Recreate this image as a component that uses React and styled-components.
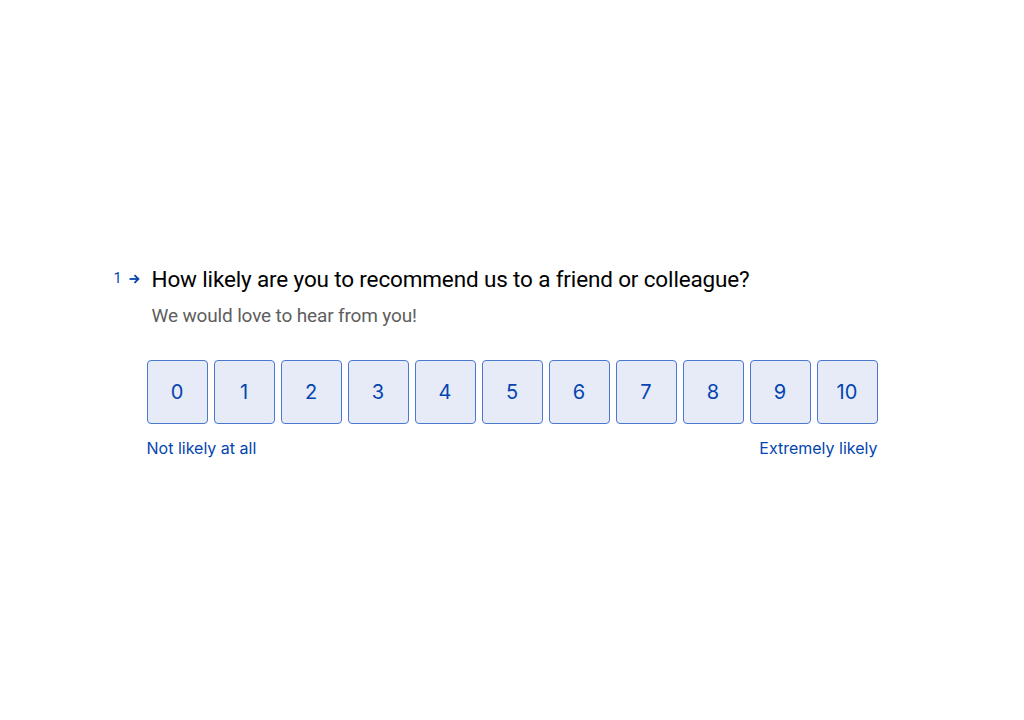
import React from 'react';
import styled, { createGlobalStyle } from 'styled-components';

const GlobalStyle = createGlobalStyle`
  html, body {
    margin: 0;
    padding: 0;
    background: #ffffff;
  }
  body {
    font-family: Inter, "Noto Sans", sans-serif;
  }
`;

const Page = styled.main`
  width: 1024px;
  height: 720px;
  display: flex;
  align-items: center;
  justify-content: center;
`;

const Block = styled.section`
  width: 731px;
  padding-top: 2px;
  position: relative;
`;

const Header = styled.div`
  position: relative;
  padding-left: 5px;
`;

const Counter = styled.div`
  position: absolute;
  left: -33px;
  top: 6px;
  display: flex;
  align-items: center;
  gap: 7px;
  color: #0445af;
  font-family: Roboto, Inter, sans-serif;
  font-size: 14.5px;
  line-height: 16px;
`;

const Question = styled.h1`
  margin: 0;
  font-family: Roboto, Inter, sans-serif;
  font-size: 22.5px;
  font-weight: 400;
  line-height: 28px;
  letter-spacing: -0.15px;
  color: #000000;
`;

const Subtitle = styled.p`
  margin: 10px 0 0;
  font-family: Roboto, Inter, sans-serif;
  font-size: 19px;
  line-height: 26px;
  letter-spacing: -0.15px;
  color: #5e5e5e;
`;

const Scale = styled.div`
  margin-top: 31px;
  display: grid;
  grid-template-columns: repeat(11, 61px);
  gap: 6px;
`;

const Option = styled.button`
  height: 64px;
  padding: 0;
  box-sizing: border-box;
  border: 1px solid #4a7ad0;
  border-radius: 4px;
  background: #e6ebf7;
  color: #0445af;
  font-family: Inter, "Noto Sans", sans-serif;
  font-size: 20px;
  cursor: pointer;
`;

const Labels = styled.div`
  margin-top: 14px;
  display: flex;
  justify-content: space-between;
  color: #0445af;
  font-size: 16px;
  line-height: 20px;
`;

function Arrow() {
  return (
    <svg width="11" height="10" viewBox="0 0 11 10" fill="none">
      <path d="M0.5 5H9" stroke="#0445af" strokeWidth="1.8" />
      <path d="M5.5 1.2L9.4 5L5.5 8.8" stroke="#0445af" strokeWidth="1.8" />
    </svg>
  );
}

function App() {
  const values = Array.from({ length: 11 }, (_, i) => i);

  return (
    <>
      <GlobalStyle />
      <Page>
        <Block>
          <Header>
            <Counter>
              <span>1</span>
              <Arrow />
            </Counter>
            <Question>How likely are you to recommend us to a friend or colleague?</Question>
            <Subtitle>We would love to hear from you!</Subtitle>
          </Header>
          <Scale>
            {values.map((value) => (
              <Option key={value}>{value}</Option>
            ))}
          </Scale>
          <Labels>
            <span>Not likely at all</span>
            <span>Extremely likely</span>
          </Labels>
        </Block>
      </Page>
    </>
  );
}

export default App;
